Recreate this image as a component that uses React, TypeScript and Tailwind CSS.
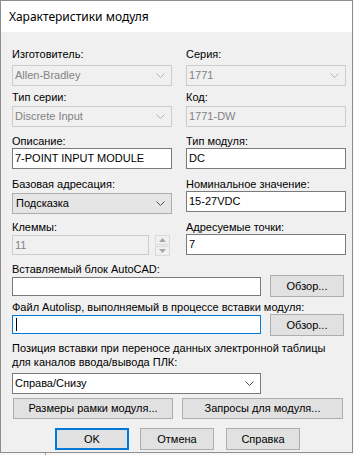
import React from "react";

const Chevron = ({ color }: { color: string }) => (
  <svg width="9" height="5" viewBox="0 0 9 5" className="block">
    <polyline points="0.5,0.5 4.5,4.5 8.5,0.5" fill="none" stroke={color} strokeWidth="1" />
  </svg>
);

const Label = ({ children, cls = "" }: { children: React.ReactNode; cls?: string }) => (
  <div className={"h-[13px] leading-[13px] text-[11px] whitespace-nowrap text-black " + cls}>{children}</div>
);

const DisabledCombo = ({ text, cls = "" }: { text: string; cls?: string }) => (
  <div className={"h-[21px] border border-[#cccccc] bg-[#f0f0f0] flex items-center justify-between pl-[2px] pr-[6px] " + cls}>
    <span className="text-[11px] text-[#838383] leading-none">{text}</span>
    <Chevron color="#b4b4b4" />
  </div>
);

const DisabledInput = ({ text, cls = "" }: { text: string; cls?: string }) => (
  <div className={"h-[21px] border border-[#cccccc] bg-[#f0f0f0] flex items-center pl-[2px] " + cls}>
    <span className="text-[11px] text-[#838383] leading-none">{text}</span>
  </div>
);

const Input = ({ text, cls = "" }: { text: string; cls?: string }) => (
  <div className={"h-[21px] border border-[#7a7a7a] bg-white flex items-center pl-[2px] " + cls}>
    <span className="text-[11px] text-black leading-none">{text}</span>
  </div>
);

const Button = ({ text, cls = "" }: { text: string; cls?: string }) => (
  <div className={"border border-[#adadad] bg-[#e1e1e1] flex items-center justify-center text-[11px] text-black " + cls}>
    {text}
  </div>
);

export default function App() {
  return (
    <div className="w-[354px] h-[455px] bg-[#f7f7f7] relative overflow-hidden font-['Liberation_Sans',Arial,sans-serif]">
      <div className="w-[353px] h-[453px] border border-[#8e8e8e] flex flex-col">
        <div className="h-[31px] bg-white flex items-center pl-[8px] text-[12px] text-black font-['Segoe_UI','Noto_Sans',sans-serif]">
          Характеристики модуля
        </div>
        <div className="flex-1 bg-[#f0f0f0] pl-[11px] flex flex-col">
          <div className="flex">
            {/* left column */}
            <div className="w-[160px] flex flex-col">
              <Label cls="mt-[16px]">Изготовитель:</Label>
              <DisabledCombo text="Allen-Bradley" cls="mt-[4px]" />
              <Label cls="mt-[5px]">Тип серии:</Label>
              <DisabledCombo text="Discrete Input" cls="mt-[2px]" />
              <Label cls="mt-[8px]">Описание:</Label>
              <Input text="7-POINT INPUT MODULE" />
              <Label cls="mt-[9px]">Базовая адресация:</Label>
              <div className="mt-[2px] h-[21px] border border-[#adadad] bg-[#e5e5e5] flex items-center justify-between pl-[3px] pr-[6px]">
                <span className="text-[11px] text-black leading-none">Подсказка</span>
                <Chevron color="#505050" />
              </div>
              <Label cls="mt-[7px]">Клеммы:</Label>
              <div className="mt-[1px] flex">
                <div className="w-[137px] h-[20px] border border-[#cccccc] bg-[#f0f0f0] flex items-center pl-[2px]">
                  <span className="text-[11px] text-[#838383] leading-none">11</span>
                </div>
                <div className="ml-[6px] w-[15px] flex flex-col gap-[1px]">
                  <div className="h-[10px] border border-[#dadada] bg-[#f0f0f0] flex items-center justify-center">
                    <svg width="7" height="4" viewBox="0 0 7 4"><polygon points="3.5,0 7,4 0,4" fill="#a8a8a8" /></svg>
                  </div>
                  <div className="h-[10px] border border-[#dadada] bg-[#f0f0f0] flex items-center justify-center">
                    <svg width="7" height="4" viewBox="0 0 7 4"><polygon points="0,0 7,0 3.5,4" fill="#a8a8a8" /></svg>
                  </div>
                </div>
              </div>
            </div>
            {/* right column */}
            <div className="w-[160px] ml-[14px] flex flex-col">
              <Label cls="mt-[16px]">Серия:</Label>
              <DisabledCombo text="1771" cls="mt-[4px]" />
              <Label cls="mt-[5px]">Код:</Label>
              <DisabledInput text="1771-DW" cls="mt-[2px]" />
              <Label cls="mt-[8px]">Тип модуля:</Label>
              <Input text="DC" />
              <Label cls="mt-[9px]">Номинальное значение:</Label>
              <Input text="15-27VDC" />
              <Label cls="mt-[9px]">Адресуемые точки:</Label>
              <Input text="7" cls="h-[20px]" />
            </div>
          </div>

          <div className="mt-[7px] h-[12px] leading-[12px] text-[11px] text-black whitespace-nowrap">Вставляемый блок AutoCAD:</div>
          <div className="flex items-start h-[22px]">
            <div className="mt-[2px] w-[249px] h-[19px] border border-[#7a7a7a] bg-white" />
            <Button text="Обзор..." cls="ml-[9px] w-[74px] h-[22px]" />
          </div>

          <div className="mt-[4px] h-[12px] leading-[12px] text-[11px] text-black whitespace-nowrap">Файл Autolisp, выполняемый в процессе вставки модуля:</div>
          <div className="mt-[1px] flex items-start h-[22px]">
            <div className="mt-[1px] w-[249px] h-[19px] border border-[#0078d7] bg-white flex items-center pl-[3px]">
              <div className="w-[1px] h-[13px] bg-black" />
            </div>
            <Button text="Обзор..." cls="ml-[9px] w-[74px] h-[22px]" />
          </div>

          <div className="mt-[5px] leading-[14px] text-[11px] text-black">
            <div>Позиция вставки при переносе данных электронной таблицы</div>
            <div>для каналов ввода/вывода ПЛК:</div>
          </div>
          <div className="mt-[4px] w-[249px] h-[21px] border border-[#7a7a7a] bg-white flex items-center justify-between pl-[2px] pr-[6px]">
            <span className="text-[11px] text-black leading-none">Справа/Снизу</span>
            <Chevron color="#505050" />
          </div>

          <div className="mt-[4px] flex">
            <Button text="Размеры рамки модуля..." cls="ml-[1px] w-[160px] h-[21px]" />
            <Button text="Запросы для модуля..." cls="ml-[9px] w-[161px] h-[21px]" />
          </div>

          <div className="mt-[9px] flex">
            <div className="ml-[43px] w-[74px] h-[22px] border-2 border-[#0078d7] bg-[#e1e1e1] flex items-center justify-center text-[11px] text-black">OK</div>
            <Button text="Отмена" cls="ml-[11px] w-[74px] h-[22px]" />
            <Button text="Справка" cls="ml-[12px] w-[74px] h-[22px]" />
          </div>
        </div>
      </div>
      <div className="absolute left-[45px] top-[453px] w-[1px] h-[2px] bg-[#a0a0a0]" />
    </div>
  );
}
